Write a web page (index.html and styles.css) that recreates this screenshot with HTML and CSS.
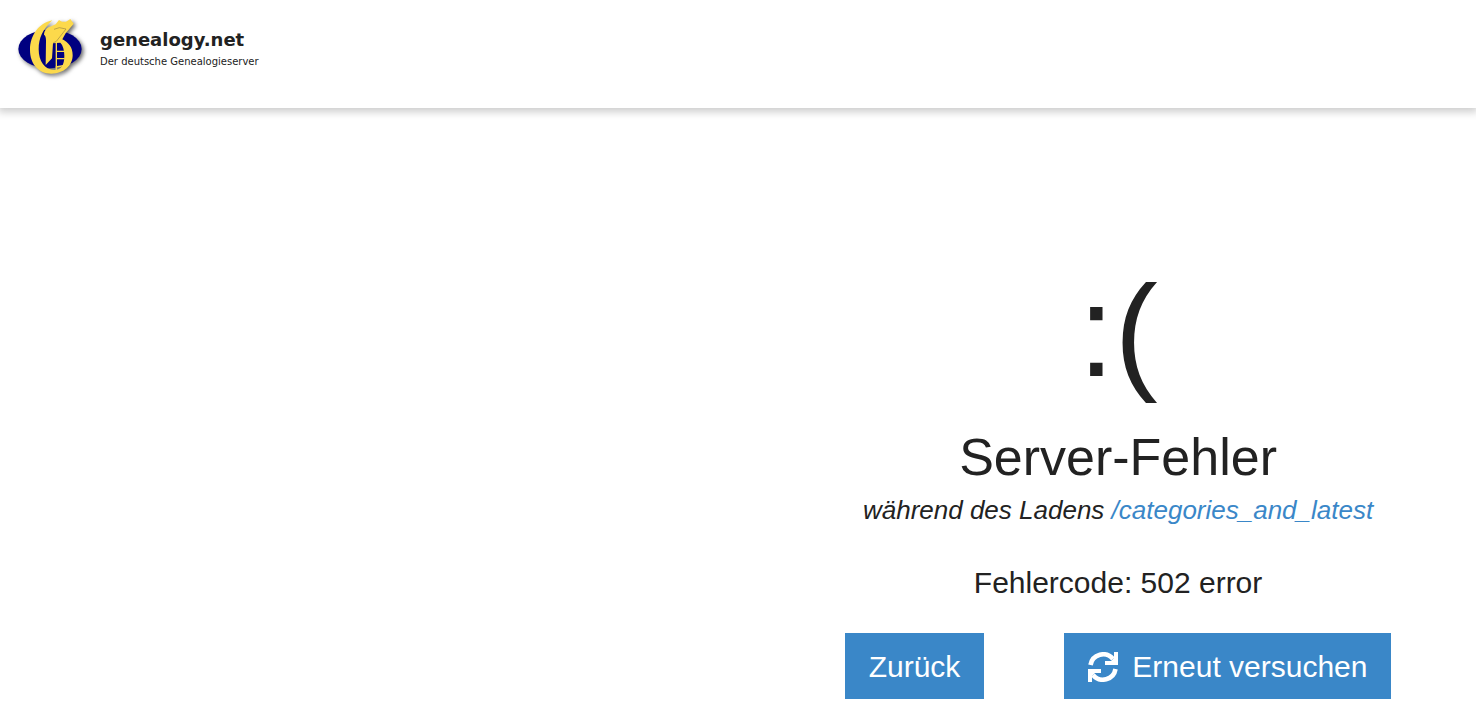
FILE: index.html
```html
<!DOCTYPE html>
<html lang="de">
<head>
  <meta charset="UTF-8" />
  <meta name="viewport" content="width=device-width, initial-scale=1.0"/>
  <title>Server-Fehler</title>
  <link rel="stylesheet" href="styles.css">
</head>
<body>
  <header class="header">
    <a class="brand" href="/">
      <svg class="logo" viewBox="0 0 252 222" aria-hidden="true">
        <ellipse cx="120" cy="117" rx="95" ry="58" fill="#000080"/>
        <g fill="#fcd94b">
          <path d="M127 31 C86 40 60 76 60 120 C60 162 86 191 124 191 C162 191 188 166 188 136 C188 112 176 98 157 88 L167 70 L191 41 L181 27 L168 35 L156 35 L147 30 L137 43 L120 50 C108 54 102 64 102 74 C106 76 108 82 108 92 L107 165 L126 145 L129 100 L151 98 C159 106 163 120 163 138 C163 166 153 180 134 180 C104 180 86 154 86 118 C86 84 98 58 127 31 Z"/>
          <path d="M138 122 H164 V126 H138 Z M138 144 H164 V148 H138 Z"/>
          <path d="M137 96 H141 V182 H137 Z"/>
          <path d="M137 169 L163 164 L162 169 L137 174 Z"/>
        </g>
        <path d="M132 58 L148 53 L168 57 L150 80 L138 95 L130 98" fill="none" stroke="#9b8744" stroke-width="2"/>
      </svg>
      <span class="brand-text">
        <strong class="brand-name">genealogy.net</strong>
        <span class="brand-claim">Der deutsche Genealogieserver</span>
      </span>
    </a>
  </header>

  <main class="main">
    <section class="error">
      <div class="face">:(</div>
      <h1 class="title">Server-Fehler</h1>
      <p class="reason">während des Ladens <a href="/categories_and_latest">/categories_and_latest</a></p>
      <p class="code">Fehlercode: 502 error</p>
      <div class="buttons">
        <button class="btn" type="button" id="back">Zurück</button>
        <button class="btn" type="button" id="retry">
          <svg class="icon" viewBox="0 0 30 30" aria-hidden="true">
            <path d="M2.5 13 A12.8 12.8 0 0 1 25 7 M27.5 17 A12.8 12.8 0 0 1 5 23" fill="none" stroke="#fff" stroke-width="4.6"/>
            <path d="M30 0 V13 H17 V9 H23 L26 6 V0 Z M0 30 V17 H13 V21 H7 L4 24 V30 Z" fill="#fff"/>
          </svg>
          Erneut versuchen
        </button>
      </div>
    </section>
  </main>

  <script>
    document.getElementById("back").addEventListener("click", () => history.back());
    document.getElementById("retry").addEventListener("click", () => location.reload());
  </script>
</body>
</html>
```

FILE: styles.css
```css
* {
  box-sizing: border-box;
}

body {
  margin: 0;
  background: #fff;
  color: #222;
  font-family: "Liberation Sans", Arial, sans-serif;
  font-size: 30px;
}

a {
  color: #3a87c8;
  text-decoration: none;
}

.header {
  padding: 10px 10px 24px;
  box-shadow: 0 2px 8px 2px rgba(0, 0, 0, 0.2);
}

.brand {
  display: inline-flex;
  align-items: center;
  gap: 6px;
  color: #222;
  font-family: "DejaVu Sans", Verdana, sans-serif;
  vertical-align: top;
}

.logo {
  width: 84px;
  height: 74px;
  filter: drop-shadow(2px 2px 2px rgba(0, 0, 0, 0.6));
}

.brand-text {
  display: flex;
  flex-direction: column;
  gap: 4px;
  padding-top: 4px;
}

.brand-name {
  font-size: 18px;
  line-height: 22px;
}

.brand-claim {
  font-size: 10px;
  line-height: 14px;
}

.main {
  padding: 138px 0 24px 51.5%;
}

.error {
  display: flex;
  flex-direction: column;
  align-items: center;
  text-align: center;
}

.face {
  margin-bottom: 10px;
  font-size: 130px;
  line-height: 170px;
}

.title {
  margin: 0;
  font-size: 52px;
  font-weight: normal;
  line-height: 62px;
}

.reason {
  margin: 4px 0 0;
  font-size: 26px;
  font-style: italic;
  line-height: 36px;
}

.code {
  margin: 35px 0 30px;
  line-height: 40px;
}

.buttons {
  display: flex;
  gap: 80px;
}

.btn {
  display: inline-flex;
  align-items: center;
  gap: 14px;
  padding: 16px 24px 14px;
  border: none;
  background: #3a87c8;
  color: #fff;
  font-family: inherit;
  font-size: 30px;
  line-height: 36px;
  white-space: nowrap;
  cursor: pointer;
}

.btn:hover {
  background: #2f71a9;
}

.icon {
  width: 30px;
  height: 30px;
}
```
